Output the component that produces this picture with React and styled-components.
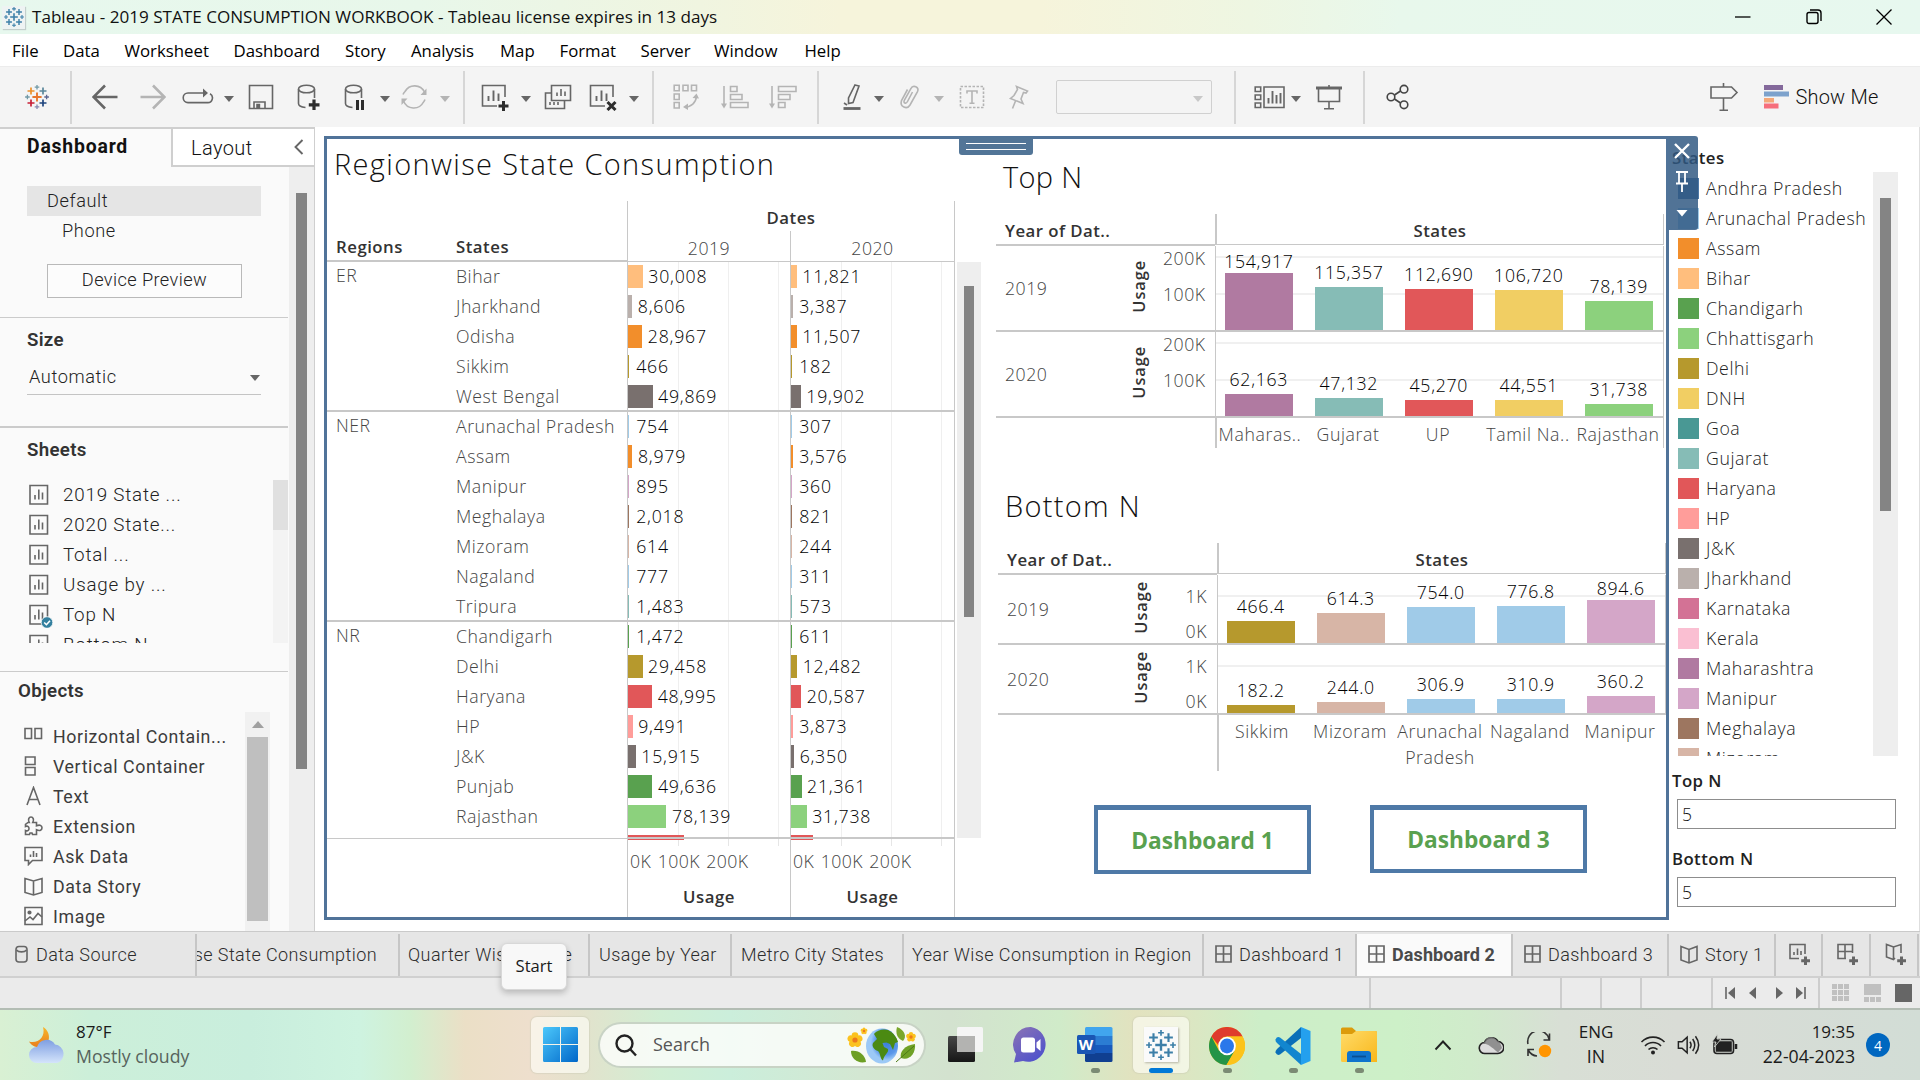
import React from 'react';
import styled, { createGlobalStyle, css } from 'styled-components';

const Global = createGlobalStyle`
  *, *::before, *::after { box-sizing: border-box; }
  body { margin: 0; overflow: hidden; background: #fff; }
`;

const SEGOE = '"Open Sans", "Noto Sans", sans-serif';
const BENTON = 'Roboto, "Liberation Sans", sans-serif';

const Page = styled.div`
  width: 1920px;
  height: 1080px;
  display: flex;
  flex-direction: column;
  overflow: hidden;
  white-space: nowrap;
  position: relative;
  background: #fff;
  font-family: ${SEGOE};
`;

/* ---------- window chrome ---------- */
const TitleBar = styled.header`
  height: 34px;
  flex: none;
  display: flex;
  align-items: center;
  padding-left: 2px;
  color: #111;
  font-size: 17.1px;
  background: linear-gradient(90deg, #e7f8ee 0, #e8f7ea 420px, #f0f5e0 700px, #f6f4db 840px, #f6f4db 1040px, #eef6e2 1250px, #e8f8ec 1400px, #e7f8ef 100%);
  & > span { padding-bottom: 2px; }
`;
const AppBadge = styled.div`
  width: 23px;
  height: 23px;
  margin-right: 7px;
  background: #eef3f3;
  box-shadow: 1px 1px 1px #c3cfcc;
  display: flex;
  align-items: center;
  justify-content: center;
`;
const WindowButtons = styled.div`
  margin-left: auto;
  margin-right: 28px;
  display: flex;
  align-items: center;
  gap: 54.5px;
`;
const MenuBar = styled.nav`
  height: 32px;
  flex: none;
  display: flex;
  align-items: center;
  padding-left: 12px;
  font-size: 16.8px;
  color: #000;
`;
const MenuItem = styled.span`
  width: ${p => p.$w}px;
`;
const ToolBar = styled.div`
  height: 61px;
  flex: none;
  display: flex;
  align-items: center;
  background: #f4f4f4;
  border-top: 1px solid #ececec;
`;
const ToolSlot = styled.div`
  flex: none;
  width: ${p => p.$w}px;
  margin-left: ${p => p.$gap}px;
  display: flex;
  justify-content: center;
  align-items: center;
`;
const ToolDivider = styled.i`
  width: 2px;
  height: 53px;
  background: #d6d6d6;
`;
const Caret = styled.i`
  width: 0;
  height: 0;
  margin-top: 3px;
  border: 5px solid transparent;
  border-top: 6px solid ${p => p.$c || '#666'};
  border-bottom: 0;
`;
const ToolCombo = styled.div`
  width: 156px;
  height: 34px;
  border: 1.5px solid #d0d0d0;
  border-radius: 2px;
  display: flex;
  align-items: center;
  justify-content: flex-end;
  padding-right: 8px;
`;
const ShowMe = styled.span`
  font-family: ${BENTON};
  font-size: 20px;
  font-weight: 300;
  letter-spacing: 0.2px;
  color: #111;
`;

/* ---------- left panel ---------- */
const Main = styled.main`
  height: 804px;
  flex: none;
  display: flex;
`;
const SidePanel = styled.aside`
  width: 315px;
  flex: none;
  display: flex;
  flex-direction: column;
  background: #fafafa;
  border-top: 2px solid #cfcfcf;
  border-right: 1px solid #cfcfcf;
  font-family: ${BENTON};
  font-size: 18.2px;
  font-weight: 300;
  letter-spacing: 0.6px;
  color: #222;
  overflow: hidden;
`;
const PanelTabs = styled.div`
  height: 38px;
  flex: none;
  display: flex;
`;
const PanelTabActive = styled.div`
  width: 171px;
  padding: 6px 0 0 27px;
  line-height: 24px;
  font-weight: 700;
  font-size: 19.4px;
  letter-spacing: 0.8px;
  color: #111;
`;
const PanelTab = styled.div`
  flex: 1;
  background: #fff;
  border-left: 2px solid #cfcfcf;
  border-bottom: 2px solid #cfcfcf;
  display: flex;
  align-items: center;
  justify-content: space-between;
  padding: 2px 10px 0 18px;
  font-size: 20px;
  letter-spacing: 0.4px;
  color: #111;
`;
const PanelBody = styled.div`
  flex: 1;
  min-height: 0;
  display: flex;
`;
const PanelContent = styled.div`
  width: 289px;
  display: flex;
  flex-direction: column;
`;
const Section = styled.section`
  height: ${p => p.$h}px;
  flex: none;
  border-bottom: ${p => p.$line || 1}px solid #cbcbcb;
  margin-right: 1px;
  padding-top: ${p => p.$pt || 0}px;
  padding-left: ${p => p.$pl ?? 27}px;
  overflow: hidden;
`;
const DeviceRow = styled.div`
  width: 234px;
  height: 30px;
  display: flex;
  align-items: center;
  padding: 0 0 2px ${p => p.$indent}px;
  background: ${p => (p.$active ? '#e5e5e5' : 'transparent')};
`;
const PreviewButton = styled.div`
  width: 195px;
  height: 34px;
  margin: 18px 0 0 20px;
  padding-bottom: 3px;
  border: 1px solid #b9b9b9;
  background: #fcfcfc;
  display: flex;
  align-items: center;
  justify-content: center;
  letter-spacing: 0.4px;
`;
const Heading = styled.h3`
  margin: 0;
  height: 30px;
  line-height: 30px;
  font-size: 18.7px;
  font-weight: 600;
  letter-spacing: 0.3px;
  color: #333;
`;
const SizeSelect = styled.div`
  width: 234px;
  height: 36px;
  margin-top: 4px;
  padding: 0 1px 0 2px;
  border-bottom: 1.5px solid #c4c4c4;
  display: flex;
  align-items: center;
  justify-content: space-between;
`;
const SheetBox = styled.div`
  height: 163px;
  display: flex;
  justify-content: space-between;
  margin-top: 15px;
  overflow: hidden;
`;
const SheetRow = styled.div`
  height: 30px;
  display: flex;
  align-items: center;
  padding-left: 2px;
  gap: 10px;
  letter-spacing: 0.8px;
  font-size: 18.8px;
`;
const ObjectBox = styled.div`
  display: flex;
  justify-content: space-between;
  margin: 6px 18px 0 6px;
`;
const ObjectList = styled.div`
  padding-top: 9px;
`;
const ObjectRow = styled.div`
  height: 30px;
  display: flex;
  align-items: center;
  gap: 10px;
  font-size: 17.8px;
  font-weight: 400;
  letter-spacing: 0.6px;
  color: #3c3c3c;
  & svg { flex: none; }
`;
const ScrollTrack = styled.div`
  flex: none;
  width: ${p => p.$w}px;
  height: ${p => (p.$h ? p.$h + 'px' : '100%')};
  padding-top: ${p => p.$pt || 0}px;
  background: ${p => p.$bg || '#eeeeee'};
  display: flex;
  flex-direction: column;
  align-items: center;
`;
const ScrollThumb = styled.div`
  width: ${p => p.$w}px;
  height: ${p => p.$h}px;
  background: ${p => p.$bg || '#848484'};
`;
const UpArrow = styled.i`
  border: 6px solid transparent;
  border-bottom: 7px solid #a0a0a0;
  border-top: 0;
  margin: 9px 0;
`;

/* ---------- dashboard frame ---------- */
const Canvas = styled.div`
  flex: none;
  width: 1354px;
  padding: 9px 0 11px 9px;
`;
const Frame = styled.div`
  position: relative;
  width: 1345px;
  height: 784px;
  border: 3px solid #507399;
  display: flex;
`;
const Handle = styled.div`
  position: absolute;
  left: 632px;
  top: -2px;
  width: 74px;
  height: 18px;
  background: #527597;
  border-radius: 0 0 3px 3px;
  display: flex;
  flex-direction: column;
  gap: 5px;
  padding: 6px 7px;
  & i { height: 1px; background: #fff; }
`;
const SheetTitle = styled.h2`
  margin: 0;
  height: ${p => p.$h}px;
  line-height: ${p => p.$h - 2}px;
  padding-left: 7px;
  font-size: 29px;
  font-weight: 300;
  letter-spacing: ${p => p.$ls ?? 1.35}px;
  color: #111;
`;
const LINE = '#c8c8c8';
const vizText = css`
  font-size: 17.7px;
  font-weight: 300;
  letter-spacing: 0.52px;
`;
const TablePane = styled.section`
  width: 669px;
  flex: none;
`;
const HeadGrid = styled.div`
  height: 61px;
  margin-top: 10px;
  display: flex;
  width: 628px;
`;
const HeadLabel = styled.div`
  width: ${p => p.$w}px;
  display: flex;
  align-items: flex-end;
  padding: 0 0 1px 9px;
  border-bottom: 2px solid ${LINE};
  line-height: 24px;
  font-size: 16.8px;
  font-weight: 600;
  letter-spacing: 0.5px;
  color: #333;
`;
const HeadDates = styled.div`
  width: 328px;
  border: 1px solid ${LINE};
  border-top: 0;
  display: flex;
  flex-direction: column;
`;
const HeadBold = styled.div`
  height: ${p => p.$h || 30}px;
  display: flex;
  align-items: center;
  justify-content: center;
  padding-top: ${p => p.$pt || 0}px;
  font-size: 16.8px;
  font-weight: 600;
  letter-spacing: 0.5px;
  color: #333;
`;
const HeadYears = styled.div`
  flex: 1;
  display: grid;
  grid-template-columns: 162px 164px;
  & span {
    ${vizText}
    color: #444;
    text-align: center;
    line-height: 34px;
    height: 30px;
  }
  & span + span { border-left: 1px solid ${LINE}; }
`;
const TableWrap = styled.div`
  display: flex;
  gap: 2px;
  height: 575px;
`;
const TableBody = styled.div`
  width: 628px;
`;
const Group = styled.div`
  height: ${p => p.$h}px;
  display: flex;
  border-bottom: ${p => (p.$last ? 0 : 2)}px solid ${LINE};
`;
const RegionCell = styled.div`
  ${vizText}
  width: 129px;
  padding: 0 0 0 9px;
  line-height: 27px;
  color: #444;
`;
const StatesCol = styled.div`
  width: 171px;
`;
const StateCell = styled.div`
  ${vizText}
  height: 30px;
  line-height: 29px;
  color: #444;
`;
const PlotCol = styled.div`
  width: ${p => p.$w}px;
  border-left: 1px solid ${LINE};
  border-right: ${p => (p.$end ? 1 : 0)}px solid ${LINE};
  background-image: linear-gradient(#efefef, #efefef), linear-gradient(#efefef, #efefef), linear-gradient(#efefef, #efefef);
  background-repeat: no-repeat;
  background-size: 1px 100%;
  background-position: 50px 0, 100px 0, 150px 0;
`;
const BarRow = styled.div`
  height: ${p => p.$h || 30}px;
  display: flex;
  align-items: flex-start;
  padding-top: 3px;
`;
const HBar = styled.i`
  flex: none;
  height: ${p => p.$h || 23}px;
  background: ${p => p.$c};
  width: ${p => p.$w}px;
  margin-right: ${p => Math.max(5.5, 8.2 - p.$w)}px;
`;
const MarkLabel = styled.span`
  ${vizText}
  line-height: 23px;
  letter-spacing: 0.8px;
  color: #000;
`;
const AxisFooter = styled.div`
  height: 80px;
  width: 628px;
  display: flex;
`;
const AxisBlank = styled.div`
  width: 300px;
  margin-top: 1px;
  border-top: 1px solid ${LINE};
`;
const AxisCol = styled.div`
  width: ${p => p.$w}px;
  border-left: 1px solid ${LINE};
  border-right: ${p => (p.$end ? 1 : 0)}px solid ${LINE};
  border-top: 2px solid ${LINE};
  background-image: linear-gradient(${C => '#e15759'}, #e15759), linear-gradient(#e6e6e6, #e6e6e6), linear-gradient(#e6e6e6, #e6e6e6), linear-gradient(#e6e6e6, #e6e6e6);
  background-repeat: no-repeat;
  background-size: ${p => p.$under}px 1px, 1px 7px, 1px 7px, 1px 7px;
  background-position: 0 0, 50px 0, 100px 0, 150px 0;
`;
const AxisTicks = styled.div`
  ${vizText}
  letter-spacing: 0.4px;
  line-height: 24px;
  padding: 10px 0 0 2px;
  display: flex;
  gap: 6.5px;
  color: #444;
`;

/* ---------- ranked charts ---------- */
const ChartsPane = styled.section`
  flex: 1;
  min-width: 0;
  padding-top: 17px;
`;
const Ranked = styled.div`
  width: ${p => p.$w}px;
  margin-left: ${p => p.$ml}px;
  margin-bottom: 37px;
`;
const RankHead = styled.div`
  height: 32px;
  margin-top: 14px;
  display: flex;
`;
const RankYearHead = styled.div`
  width: 219px;
  padding: 4px 0 0 9px;
  border-bottom: 2px solid ${LINE};
  line-height: 26px;
  font-size: 16.8px;
  font-weight: 600;
  letter-spacing: 0.45px;
  color: #333;
`;
const RankStatesHead = styled.div`
  flex: 1;
  border-left: 2px solid ${LINE};
  border-right: 1px solid ${LINE};
  border-bottom: 1px solid ${LINE};
  margin-bottom: 1px;
`;
const RankRow = styled.div`
  height: ${p => p.$h}px;
  display: flex;
  border-bottom: 2px solid ${LINE};
`;
const YearCell = styled.div`
  ${vizText}
  width: 120px;
  padding: 0 0 1px 9px;
  display: flex;
  align-items: center;
  color: #444;
`;
const AxisName = styled.div`
  width: 47px;
  padding: 0 3px 4px 0;
  display: flex;
  align-items: center;
  justify-content: center;
  & span {
    writing-mode: vertical-rl;
    transform: rotate(180deg);
    font-size: 16.4px;
    font-weight: 600;
    letter-spacing: 0.9px;
    color: #333;
  }
`;
const AxisScale = styled.div`
  ${vizText}
  width: 52px;
  padding: ${p => p.$pt}px 10px 0 0;
  display: flex;
  flex-direction: column;
  gap: ${p => p.$gap}px;
  line-height: 20px;
  text-align: right;
  color: #444;
`;
const Plot = styled.div`
  flex: 1;
  border-left: 1px solid ${LINE};
  border-right: 1px solid ${LINE};
  padding-left: 9px;
  display: flex;
  align-items: flex-end;
  gap: 22.3px;
  background-image: linear-gradient(#f0f0f0, #f0f0f0), linear-gradient(#f0f0f0, #f0f0f0);
  background-repeat: no-repeat;
  background-size: 100% 2px;
  background-position: 0 ${p => p.$grid[0]}px, 0 ${p => p.$grid[1]}px;
`;
const BarCol = styled.div`
  width: 67.7px;
  display: flex;
  flex-direction: column;
  align-items: center;
`;
const BarValue = styled.span`
  ${vizText}
  line-height: 20px;
  margin-bottom: ${p => (p.$tight ? 2 : 5)}px;
  letter-spacing: 0.72px;
  color: #000;
`;
const VBar = styled.i`
  width: 100%;
  height: ${p => p.$h}px;
  background: ${p => p.$c};
`;
const RankFoot = styled.div`
  height: ${p => p.$h}px;
  margin-left: 219px;
  padding: 3px 0 0 0;
  border-left: 2px solid ${LINE};
  border-right: 1px solid ${p => (p.$open ? 'transparent' : LINE)};
  display: grid;
  grid-template-columns: 86px repeat(4, 90px);
  & span {
    ${vizText}
    letter-spacing: 0.6px;
    line-height: 26px;
    display: flex;
    justify-content: center;
    text-align: center;
    color: #444;
    white-space: pre;
  }
`;
const NavButtons = styled.div`
  display: flex;
  gap: 59px;
  padding-left: 98px;
  margin-top: -3px;
`;
const NavButton = styled.div`
  width: 217px;
  height: ${p => p.$h}px;
  border: 4px solid #4e79a7;
  border-top-width: 5px;
  display: flex;
  align-items: center;
  justify-content: center;
  color: #59a14f;
  font-weight: 700;
  font-size: 22.7px;
`;

/* ---------- legend ---------- */
const LegendPane = styled.aside`
  position: relative;
  flex: 1;
  border-right: 1px solid #dedede;
  padding: 18px 0 0 3px;
  display: flex;
  flex-direction: column;
`;
const LegendTitle = styled.div`
  height: 27px;
  line-height: 26px;
  font-size: 16.8px;
  font-weight: 600;
  letter-spacing: 0.4px;
  color: #222;
`;
const LegendBox = styled.div`
  height: 584px;
  display: flex;
  justify-content: space-between;
  overflow: hidden;
  padding: 0 21px 0 6px;
`;
const LegendList = styled.div`
  padding-top: 1px;
`;
const LegendItem = styled.div`
  ${vizText}
  height: 30px;
  display: flex;
  align-items: center;
  gap: 7px;
  color: #222;
  letter-spacing: 0.6px;
  & i { width: 21px; height: 21px; background: ${p => p.$c}; }
`;
const ParamLabel = styled(LegendTitle)`
  margin-top: ${p => p.$mt}px;
`;
const ParamInput = styled.div`
  width: 219px;
  height: 30px;
  margin: 4px 0 0 5px;
  border: 1.5px solid #8d8d8d;
  display: flex;
  align-items: center;
  padding: 0 0 1px 4px;
  font-weight: 300;
  font-size: 17.5px;
  color: #111;
`;
const FloatBar = styled.div`
  position: absolute;
  left: 0;
  top: 9px;
  width: 29px;
  height: 94px;
  border-radius: 0 3px 3px 0;
  background: rgba(48, 88, 130, 0.84);
  display: flex;
  flex-direction: column;
  align-items: center;
  padding: 7px 3px 0 0;
`;

/* ---------- sheet tabs & status ---------- */
const SheetTabs = styled.div`
  height: 47px;
  flex: none;
  display: flex;
  background: #e6e6e6;
  border-top: 1px solid #cacaca;
  border-bottom: 2px solid #d0d0d0;
  font-family: ${BENTON};
  font-size: 18px;
  font-weight: 300;
  letter-spacing: 0.42px;
  color: #2c2c2c;
`;
const SheetTab = styled.div`
  flex: none;
  width: ${p => p.$w}px;
  margin-top: 2px;
  display: flex;
  align-items: center;
  justify-content: ${p => (p.$scrolled ? 'flex-end' : 'flex-start')};
  gap: ${p => p.$gap || 7}px;
  padding-left: ${p => p.$pl ?? 10}px;
  padding-right: ${p => (p.$scrolled ? 21 : 0)}px;
  padding-bottom: 2px;
  border-right: 2px solid #c6c6c6;
  overflow: hidden;
  ${p => p.$active && css`
    background: #fafafa;
    color: #4a4a4a;
    font-weight: 700;
    letter-spacing: 0.1px;
  `}
  & span { flex: none; }
  & svg { flex: none; }
`;
const StatusBar = styled.div`
  height: 30px;
  flex: none;
  display: flex;
  background: #ebebeb;
`;
const StatusCell = styled.div`
  flex: none;
  width: ${p => p.$w}px;
  border-right: 2px solid ${p => (p.$end ? 'transparent' : '#cdcdcd')};
  display: flex;
  align-items: center;
  justify-content: space-between;
  padding: 0 ${p => p.$pr ?? p.$px ?? 0}px 0 ${p => p.$px || 0}px;
`;

/* ---------- taskbar ---------- */
const TaskBar = styled.footer`
  flex: 1;
  display: flex;
  align-items: center;
  border-top: 2px solid #b3bdb4;
  color: #1b1b1b;
  font-size: 17px;
  background: linear-gradient(90deg, #d9f0d3 0, #ccefd9 90px, #c9eedd 250px, #cef3e0 360px, #d2efcf 410px, #ebdfc6 465px, #eedfcd 530px, #e3e2cc 580px, #d1eed4 660px, #cbeedb 730px, #d3e7d2 860px, #d3e2cf 950px, #d0ebc9 1060px, #e2e2bf 1135px, #e0e4c1 1170px, #cdeec8 1260px, #cdf0c8 1400px, #d0ebcb 1470px, #d8dfd5 1560px, #d9dcd6 1680px, #d2ddd6 1920px);
`;
const Weather = styled.div`
  width: 531px;
  padding-left: 28px;
  display: flex;
  align-items: center;
  gap: 10px;
`;
const TwoLine = styled.div`
  display: flex;
  flex-direction: column;
  align-items: ${p => p.$align || 'flex-start'};
  width: ${p => (p.$w ? p.$w + 'px' : 'auto')};
  line-height: 24px;
  padding-bottom: 2px;
  font-size: 17px;
  & small { font-size: 17.7px; color: ${p => p.$sub || '#1b1b1b'}; }
`;
const TaskTile = styled.div`
  flex: none;
  width: ${p => p.$w || 66}px;
  height: 56px;
  display: flex;
  flex-direction: column;
  align-items: center;
  justify-content: space-between;
  padding-top: 10px;
  border-radius: 6px;
  ${p => p.$lit && css`
    background: rgba(255, 255, 248, 0.62);
    box-shadow: 0 0 1px 1px rgba(200, 200, 180, 0.45);
    margin: 0 ${p.$mx || 0}px;
  `}
`;
const RunDot = styled.i`
  width: ${p => (p.$on ? 24 : 9)}px;
  height: 5px;
  border-radius: 3px;
  background: ${p => (p.$on ? '#0078d7' : '#7b8b74')};
`;
const SearchPill = styled.div`
  width: 328px;
  height: 46px;
  margin: 0 14px 0 9px;
  border: 2px solid rgba(175, 190, 172, 0.65);
  border-radius: 23px;
  background: rgba(252, 253, 250, 0.85);
  display: flex;
  align-items: center;
  padding: 0 5px 0 14px;
  font-size: 18px;
  color: #555;
  & span { margin-left: 15px; margin-right: auto; padding-bottom: 2px; }
`;
const Tray = styled.div`
  margin-left: auto;
  padding-right: 30px;
  display: flex;
  align-items: center;
`;
const TrayItem = styled.div`
  display: flex;
  justify-content: center;
  width: ${p => p.$w}px;
`;
const Badge = styled.div`
  width: 24px;
  height: 24px;
  border-radius: 50%;
  margin-left: 11px;
  background: #0067c0;
  color: #fff;
  font-size: 14px;
  display: flex;
  align-items: center;
  justify-content: center;
`;
const StartTip = styled.div`
  position: absolute;
  left: 501px;
  top: 943px;
  width: 66px;
  height: 47px;
  padding-bottom: 2px;
  border-radius: 6px;
  background: #f8f8f8;
  border: 1px solid #d8d8d8;
  box-shadow: 0 3px 6px rgba(0, 0, 0, 0.22);
  display: flex;
  align-items: center;
  justify-content: center;
  font-size: 16.6px;
  color: #1a1a1a;
`;

/* ---------- icons ---------- */
const plus = (x, y, r) => `M${x - r} ${y}H${x + r}M${x} ${y - r}V${y + r}`;
const TableauMark = ({ size = 24, colors }) => {
  const c = colors || ['#e8762d', '#eb912c', '#5b879b', '#c72037', '#1f457e', '#7199a6', '#7199a6', '#5c6692', '#8588b0'];
  return (
    <svg width={size} height={size} viewBox="0 0 24 24" fill="none" strokeWidth="1.7">
      <path d={plus(12, 12, 4.6)} stroke={c[0]} strokeWidth="1.9" />
      <path d={plus(6, 6, 3.5)} stroke={c[1]} />
      <path d={plus(18, 6, 3.5)} stroke={c[2]} />
      <path d={plus(6, 18, 3.5)} stroke={c[3]} />
      <path d={plus(18, 18, 3.5)} stroke={c[4]} />
      <g strokeWidth="1.3">
        <path d={plus(12, 2.2, 2.3)} stroke={c[5]} />
        <path d={plus(2.4, 12, 2.3)} stroke={c[6]} />
        <path d={plus(21.6, 12, 2.3)} stroke={c[7]} />
        <path d={plus(12, 21.8, 2.3)} stroke={c[8]} />
      </g>
    </svg>
  );
};
const BLUES = Array(9).fill('#3c7fa8');
const Ico = ({ w = 26, h = 26, c = '#666', sw = 1.6, children }) => (
  <svg width={w} height={h} viewBox={`0 0 ${w} ${h}`} fill="none" stroke={c} strokeWidth={sw}>{children}</svg>
);
const G = '#b4b4b4';
const Back = () => <Ico sw={2.6}><path d="M1.5 13H25.5M13 1.5L1.5 13L13 24.5" /></Ico>;
const Forward = () => <Ico sw={2.6} c={G}><path d="M.5 13H24.5M13 1.5L24.5 13L13 24.5" /></Ico>;
const Replay = () => <Ico w={32} h={20}><path d="M22 6H6a4.7 4.7 0 0 0 0 9.6H25.5a4.7 4.7 0 0 0 2.5-8.8" /><path d="M21 1.5L26 6L21 10.5Z" fill="#666" stroke="none" /></Ico>;
const Save = () => <Ico><path d="M1.5 1.5H24.5V24.5H1.5Z" /><path d="M6 24V18H17V24" /><path d="M9 20.5h2.4v3H9z" fill="#666" /></Ico>;
const Cylinder = ({ children }) => (
  <Ico w={24} h={26}><ellipse cx="9.5" cy="5" rx="8" ry="3.8" /><path d="M1.5 5V19.5c0 2 3 3.6 7 4M17.5 5V14" />{children}</Ico>
);
const DbAdd = () => <Cylinder><path d="M17 15.5V26M11.8 20.8H22.5" stroke="#2d2d2d" strokeWidth="3.2" /></Cylinder>;
const DbPause = () => <Cylinder><path d="M13.5 16V26M18.5 16V26" stroke="#2d2d2d" strokeWidth="3" /></Cylinder>;
const Refresh = () => <Ico c={G}><path d="M4 7.5A11 11 0 0 1 23.5 8M22.5 18A11 11 0 0 1 2.5 17M2 10.5A11 11 0 0 1 4 7.5M24 15.5A11 11 0 0 1 22.5 18" /><path d="M25.5 4.5V11H19.5ZM.5 21V14.5H6.5Z" fill={G} stroke="none" /></Ico>;
const SheetBase = ({ children }) => (
  <Ico w={28} h={27}><path d="M16 22H1.5V1.5H24V13" /><path d="M7.5 17V12M12.5 17V6.5M17.5 17V9.5" strokeWidth="1.9" />{children}</Ico>
);
const NewSheet = () => <SheetBase><path d="M22.5 17V27M17.5 22H27.5" stroke="#2d2d2d" strokeWidth="3" /></SheetBase>;
const ClearSheet = () => <SheetBase><path d="M18.5 18L26.5 26M26.5 18L18.5 26" stroke="#2d2d2d" strokeWidth="3" /></SheetBase>;
const DupSheet = () => <Ico w={28} h={26}><path d="M7.5 1.5H26.5V16.5H7.5Z" /><path d="M13 12V8.5M17 12V5M21 12V7.5" /><path d="M7 9H1.5V24.5H20.5V17" /><path d="M6 21v-3M10 21v-3M14 21v-3" /></Ico>;
const Swap = () => <Ico c={G}><path d="M1.2 1.2h5v5.5h-5zM10 1.2h5v5.5h-5zM18.5 1.2h5v5.5h-5zM1.2 10h5v5.5h-5zM1.2 18.5h5v5.5h-5z" /><path d="M12 23C18 23 23 19 23.5 12" /><path d="M19.5 14L23.5 9.5L26 14.5ZM15 19.5L10 23L15 26Z" fill={G} stroke="none" /></Ico>;
const SortAsc = () => <Ico w={28} c={G}><path d="M3 2V21" /><path d="M0 19.5H6L3 24.5Z" fill={G} stroke="none" /><path d="M9.5 2.5H16V7.5H9.5ZM9.5 10.5H21V15.5H9.5ZM9.5 18.5H27V23.5H9.5Z" /></Ico>;
const SortDesc = () => <Ico w={28} c={G}><path d="M3 2V21" /><path d="M0 19.5H6L3 24.5Z" fill={G} stroke="none" /><path d="M9.5 2.5H27V7.5H9.5ZM9.5 10.5H21V15.5H9.5ZM9.5 18.5H16V23.5H9.5Z" /></Ico>;
const Pen = () => <Ico w={22} h={28}><path d="M11.5 2.5L15.5 3.5L9.5 20L5 21V15.5Z" transform="translate(1.5 -.5)" /><path d="M2 20L5 22" /><path d="M1.5 25.5H18.5" strokeWidth="2.8" /></Ico>;
const Clip = () => <Ico w={22} h={26} c={G}><path d="M13.5 8L8.5 17.5c-1.6 3-4.5 1.3-3.2-1.2L12 4.5c2.2-4.5 8.5-1.2 6.5 3.2L11 21c-3 5-10.5 2-8.5-4.5L8.5 5.5" /></Ico>;
const TextMark = () => <Ico c={G}><path d="M1.5 2.5H24.5V23.5H1.5Z" strokeDasharray="2.5 1.5" /><path d="M8 9.5V7H18V9.5M13 7V19M10.5 19.2H15.5" /></Ico>;
const PinIcon = () => <Ico w={22} c={G}><path d="M8.5 2.5L19.5 7L18 9L15.5 8.5L13 15L15 19.5L2.5 14.5L6 11.5L9.5 5.5ZM7.5 17L4.5 24.5" /></Ico>;
const Fit = () => <Ico w={31}><path d="M1.2 3h5.5v4.5h-5.5zM1.2 11h5.5v4.5h-5.5zM1.2 19h5.5v4.5h-5.5zM10 3H30V23.5H10Z" /><path d="M14.5 19.5V14M18.5 19.5V7M22.5 19.5V11M26.5 19.5V9" strokeWidth="1.9" /></Ico>;
const Present = () => <Ico w={28}><path d="M1 4H27" strokeWidth="3" /><path d="M3.5 5V17.5H24.5V5M14 17.5V24.5M9 24.7H19M14 1v3" /></Ico>;
const Share = () => <Ico w={24} c="#444"><circle cx="5" cy="13" r="3.8" /><circle cx="18" cy="5.2" r="3.8" /><circle cx="18" cy="20.8" r="3.8" /><path d="M8.5 11L14.5 7M8.5 15L14.5 19" /></Ico>;
const Signpost = () => <Ico w={30} h={30}><path d="M2 5H22.5L28 10.5L22.5 16H2ZM14.5 1V5M14.5 16V28M10.5 28.3H19" /></Ico>;
const ShowMeIcon = () => (
  <svg width="25" height="24"><path d="M0 0h19v5H0z" fill="#84699b" /><path d="M0 6.5h25v5H0z" fill="#7da2cc" /><path d="M0 13h10v4.5H0z" fill="#f5a878" /><path d="M0 18.5h14.5v5H0z" fill="#f66f7c" /></svg>
);
const MiniSheet = ({ check }) => (
  <svg width="24" height="26" viewBox="0 0 24 26" fill="none" stroke="#666" strokeWidth="1.6">
    <path d="M1 3.5H18.5V22H1Z" /><path d="M6 17.5V13M9.8 17.5V7.5M13.5 17.5V10.5" />
    {check && <g><circle cx="18" cy="20.5" r="5.8" fill="#33809f" stroke="#fafafa" strokeWidth=".8" /><path d="M15.2 20.5l2.2 2.2 3.6-4" stroke="#fff" /></g>}
  </svg>
);
const GridIcon = () => <Ico w={17} h={18} sw={1.7}><path d="M1 1H16V17H1ZM8.5 1V17M1 9H16" /></Ico>;
const BookIcon = () => <Ico w={18} h={19}><path d="M1 1.5L9 4.5L17 1.5V15L9 18L1 15ZM9 4.5V18" /></Ico>;
const objIcons = {
  h: <Ico w={19} h={18}><path d="M1 1.5H7.5V11.5H1ZM11 1.5H17.5V11.5H11Z" /></Ico>,
  v: <Ico w={19} h={20}><path d="M1.5 1H11V8.5H1.5ZM1.5 11.5H11V19H1.5Z" /></Ico>,
  t: <Ico w={19} h={20}><path d="M3 19L9.5 1.5L16 19M5.2 13.5H13.8" /></Ico>,
  e: <Ico w={19} h={20}><path d="M4 6.5H5.2C3.6 3.500 5 1 7 1S10.400 3.500 8.800 6.500H12.500V9.800C16 8.300 18 9.600 18 11.800S16 15.300 12.500 13.800V18.500H8.500L8 17H6L5.500 18.500H1.500V14.500C4 15.500 5 14 5 12.500S4 9.500 1.500 10.500V8.500Z" /></Ico>,
  a: <Ico w={19} h={20}><path d="M1 1.5H18V14.5H8.5L4.5 18.5V14.5H1Z" /><path d="M6.5 11V8.5M9.5 11V5M12.5 11V7" /></Ico>,
  d: <Ico w={19} h={19}><path d="M1 1.5L9.500 4L18 1.500V15.500L9.500 18L1 15.500ZM9.500 4V18" /></Ico>,
  i: <Ico w={19} h={20}><path d="M1 1.5H18V18.5H1Z" /><path d="M1 15l5-4 3 2.5 5-6 4 3.5" /><circle cx="5.5" cy="6.5" r="1.3" fill="#666" /></Ico>,
};
const DbSmall = () => <Ico w={13} h={18}><rect x="1" y="1.5" width="11" height="15.5" rx="3" /><path d="M1.5 5c2 2.5 8 2.5 10 0" /></Ico>;
const PlusSmall = <path d="M16.5 13.5V22M12.2 17.8H21" strokeWidth="3" />;
const AddSheet = () => <Ico w={22} h={22}><path d="M10 15.5H1V1.5H16V11" /><path d="M5 12V9M8.5 12V5.5M12 12V8" />{PlusSmall}</Ico>;
const AddDash = () => <Ico w={22} h={22}><path d="M9 15.5H1V1.5H15.5V10M8 1.5V15.5M1 8.5H15.5" />{PlusSmall}</Ico>;
const AddStory = () => <Ico w={22} h={22}><path d="M10 15L8.5 16.5L1.5 14V1.5L8.5 4L16 1.5V10M8.5 4V16" />{PlusSmall}</Ico>;

const MoonCloud = () => (
  <svg width="38" height="38" viewBox="0 0 38 38">
    <defs>
      <linearGradient id="moon" x1="0" y1="0" x2="0" y2="1"><stop offset="0" stopColor="#f6b62c" /><stop offset="1" stopColor="#ea7f1c" /></linearGradient>
      <linearGradient id="cloud" x1="0" y1="0" x2="0" y2="1"><stop offset="0" stopColor="#7f9fe2" /><stop offset="1" stopColor="#d4e4fb" /></linearGradient>
    </defs>
    <path d="M15 1C24 6 23 21 11 21C6 21 3 19 1 15.5C9 18 18 12 15 1Z" fill="url(#moon)" />
    <path d="M9 37a8 8 0 0 1 0-16a10 10 0 0 1 18-2.5A9.500 9.500 0 0 1 29 37Z" fill="url(#cloud)" />
  </svg>
);
const WinLogo = () => (
  <svg width="35" height="35"><defs><linearGradient id="win" x1="0" y1="0" x2="1" y2="1"><stop offset="0" stopColor="#4cc8fb" /><stop offset="1" stopColor="#0067c9" /></linearGradient></defs>
    <path d="M0 1.5Q0 0 1.5 0H17V17H0ZM18 0H33.500Q35 0 35 1.5V17H18ZM0 18H17V35H1.5Q0 35 0 33.5ZM18 18H35V33.5Q35 35 33.5 35H18Z" fill="url(#win)" /></svg>
);
const Magnifier = () => <Ico w={24} h={24} c="#222" sw={2.4}><circle cx="10.5" cy="10.5" r="8" /><path d="M16 16L22 22.5" /></Ico>;
const Flower = ({ x, y, s }) => (
  <g transform={`translate(${x} ${y}) scale(${s})`}>
    {[0, 72, 144, 216, 288].map(a => <circle key={a} cx="0" cy="-4.3" r="3.4" fill="#fbc21f" transform={`rotate(${a})`} />)}
    <circle r="2.6" fill="#ec7a1c" />
  </g>
);
const Globe = () => (
  <svg width="72" height="38" viewBox="0 0 72 38">
    <defs><radialGradient id="sea" cx=".65" cy=".4"><stop offset="0" stopColor="#3a7fd8" /><stop offset=".7" stopColor="#5a97ea" /><stop offset="1" stopColor="#9cc9f6" /></radialGradient></defs>
    <ellipse cx="35" cy="20" rx="16" ry="17.500" fill="url(#sea)" />
    <path d="M27 8C30 4 36 2.500 41 4C47 7 50 12 51 16L48 17L46 24L43 18L39.500 16.500L35.500 17L37 21L41 23C42 27 37 28.500 36 34.500C33 33 33.500 27 31 25C27 24 24.500 20 26 17L30 13Z" fill="#4b8a12" />
    <Flower x={8} y={14} s={1} /><Flower x={17} y={5} s={0.45} /><Flower x={64} y={11} s={0.65} />
    <path d="M4 25C12 24 18 29 19 36C11 38 4 33 4 25Z" fill="#6d9f24" />
    <path d="M50 1C58 4 60 11 56 15C51 13 48 8 50 1Z" fill="#7aa72b" />
    <path d="M68 18C58 19 52 26 54 32C62 35 69 28 68 18Z" fill="#6fa126" /><path d="M67 20L49 36" stroke="#4c7a14" fill="none" />
  </svg>
);
const TaskView = () => (
  <svg width="36" height="35"><defs><linearGradient id="tv" x1="0" y1="0" x2="0" y2="1"><stop offset="0" stopColor="#474747" /><stop offset="1" stopColor="#161616" /></linearGradient></defs>
    <rect x="0" y="9" width="27" height="26" rx="1.5" fill="url(#tv)" /><rect x="9" y="0" width="26" height="25" rx="1.5" fill="#f5f5f5" /><path d="M9 9H27V25H10.5Q9 25 9 23.5Z" fill="#b3b3b1" /></svg>
);
const Chat = () => (
  <svg width="36" height="36" viewBox="0 0 36 36"><defs><linearGradient id="chat" x1="0" y1="0" x2=".7" y2="1"><stop offset="0" stopColor="#8c74b4" /><stop offset="1" stopColor="#4f51cc" /></linearGradient></defs>
    <path d="M18 0A17.5 17.5 0 1 1 10 34L1 35.5L3 27A17.5 17.5 0 0 1 18 0Z" fill="url(#chat)" /><rect x="8" y="10.5" width="14" height="15" rx="2.5" fill="#fff" /><path d="M23.5 15.5L27.5 12V24L23.5 20.5Z" fill="#fff" /></svg>
);
const WordText = styled.text`
  font: 700 15px ${SEGOE};
  fill: #fff;
`;
const Word = () => (
  <svg width="36" height="35" viewBox="0 0 36 35"><path d="M8 1.5Q8 0 9.5 0H34Q35.5 0 35.5 1.5V9H8Z" fill="#41a5ee" /><path d="M8 9H35.5V18H8Z" fill="#2b7cd3" /><path d="M8 18H35.5V26H8Z" fill="#185abd" /><path d="M8 26H35.5V33.5Q35.5 35 34 35H9.5Q8 35 8 33.5Z" fill="#103f91" /><rect y="8" width="18.5" height="19" rx="1.5" fill="#1a56b4" /><WordText x="1.8" y="23">W</WordText></svg>
);
const TableauTile = styled.div`
  width: 34px;
  height: 35px;
  background: #fafafa;
  box-shadow: 1px 1px 2px #b5b5a5;
  display: flex;
  align-items: center;
  justify-content: center;
`;
const Chrome = () => (
  <svg width="36" height="38" viewBox="0 0 36 36" preserveAspectRatio="none"><circle cx="18" cy="18" r="18" fill="#fbc116" /><path d="M2.4 9A18 18 0 0 1 33.6 9H18Q10 9 10 18Z" fill="#df3b2d" /><path d="M2.4 9A18 18 0 0 0 17.5 36L25.5 22.5H10Z" fill="#249447" /><path d="M33.6 9H18V18H26V22.5L17.5 36A18 18 0 0 0 33.6 9Z" fill="#fcc31b" /><circle cx="18" cy="18" r="8.8" fill="#fff" /><circle cx="18" cy="18" r="7" fill="#2b78ea" /></svg>
);
const Code = () => (
  <svg width="36" height="38" viewBox="0 0 36 38"><path d="M26 0L35.5 4V34L26 38Z" fill="#24a0ee" /><path d="M26 0V11L5 27.5Q2 29 .5 25.5Q0 24 2 22Z" fill="#0a6fb8" /><path d="M26 38V27L5 10.5Q2 9 .5 12.5Q0 14 2 16Z" fill="#1286cf" /></svg>
);
const Folder = () => (
  <svg width="36" height="36" viewBox="0 0 36 36"><defs><linearGradient id="fold" x1="0" y1="0" x2="1" y2="1"><stop offset="0" stopColor="#ffdb68" /><stop offset="1" stopColor="#f9b71b" /></linearGradient></defs><path d="M0 2Q0 .5 1.5 .5H11L15 4H34.5Q36 4 36 5.5V12H0Z" fill="#dc9b0b" /><path d="M0 7H11L15 4H34.5Q36 4 36 5.5V35H1.5Q0 35 0 33.5Z" fill="url(#fold)" /><path d="M6 35V27Q6 24 9 24H27Q30 24 30 27V35Z" fill="#0f74cd" /><path d="M11 29.5H25" stroke="#0a4f92" strokeWidth="1.8" /></svg>
);
const ChevronUp = () => <Ico w={18} h={12} c="#222" sw={1.9}><path d="M1.5 10.5L9 2.5L16.5 10.5" /></Ico>;
const OneDrive = () => <Ico w={26} h={20} c="#222"><path d="M7 18.5a5.5 5.5 0 0 1-.5-11A7.5 7.5 0 0 1 20 6.5A6 6 0 0 1 19.5 18.5Z" fill="#dcdcdc" /><path d="M3 9.5C9 8 11 10 20 17.500L24 13C23 9 21 6 19 5.5C15 0 9 1 6.5 7Z" fill="#7d7d7d" stroke="none" opacity=".8" /></Ico>;
const SyncIcon = () => <Ico w={26} h={26} c="#333"><path d="M2 12A10.5 10.5 0 0 1 23 7M23.5 1.5V8H17.5M2 24V17.5H8M2.5 18.5A10.5 10.5 0 0 0 11 24" /><circle cx="19" cy="19" r="6.2" fill="#ff9500" stroke="none" /></Ico>;
const Wifi = () => <Ico w={26} h={22} c="#222"><path d="M1.5 8A16 16 0 0 1 24.5 8M5 12A11 11 0 0 1 21 12M8.5 15.5A6.5 6.5 0 0 1 17.5 15.5" /><circle cx="13" cy="18.5" r="2" fill="#222" stroke="none" /></Ico>;
const Speaker = () => <Ico w={26} h={22} c="#222"><path d="M1.5 7.5H5.5L11 2.5V19.5L5.5 14.5H1.5ZM14 7.5Q16.5 11 14 14.5M17 4.5Q21.5 11 17 17.5M20 1.5Q27 11 20 20.5" /></Ico>;
const Battery = () => <Ico w={26} h={22} c="#222"><rect x="2" y="5.5" width="19.5" height="14" rx="3" /><path d="M4.5 8H19V17H4.5Z" fill="#222" /><path d="M24 10V15" strokeWidth="2.5" /><path d="M5.5 0L0 8H4L2.5 13L9 5H5Z" fill="#222" stroke="#d8dcd6" strokeWidth=".8" /></Ico>;

/* ---------- data ---------- */
const C = {
  andhra: '#4e79a7', arun: '#a0cbe8', assam: '#f28e2b', bihar: '#ffbe7d', chand: '#59a14f', chha: '#8cd17d', delhi: '#b6992d', dnh: '#f1ce63',
  goa: '#499894', guj: '#86bcb6', har: '#e15759', hp: '#ff9d9a', jk: '#79706e', jhar: '#bab0ac', kar: '#d37295', ker: '#fabfd2', mah: '#b07aa1',
  man: '#d4a6c8', meg: '#9d7660', miz: '#d7b5a6',
};
const groups = [
  ['ER', 150, [['Bihar', 30008, 11821, C.bihar], ['Jharkhand', 8606, 3387, C.jhar], ['Odisha', 28967, 11507, C.assam], ['Sikkim', 466, 182, C.delhi], ['West Bengal', 49869, 19902, C.jk]]],
  ['NER', 210, [['Arunachal Pradesh', 754, 307, C.arun], ['Assam', 8979, 3576, C.assam], ['Manipur', 895, 360, C.man], ['Meghalaya', 2018, 821, C.meg], ['Mizoram', 614, 244, C.miz], ['Nagaland', 777, 311, C.arun], ['Tripura', 1483, 573, C.guj]]],
  ['NR', 215, [['Chandigarh', 1472, 611, C.chand], ['Delhi', 29458, 12482, C.delhi], ['Haryana', 48995, 20587, C.har], ['HP', 9491, 3873, C.hp], ['J&K', 15915, 6350, C.jk], ['Punjab', 49636, 21361, C.chand], ['Rajasthan', 78139, 31738, C.chha]]],
];
const barWidth = v => Math.max(0.8, v / 2030);
const fmt = v => v.toLocaleString('en-US');
const legend = [['Andhra Pradesh', C.andhra], ['Arunachal Pradesh', C.arun], ['Assam', C.assam], ['Bihar', C.bihar], ['Chandigarh', C.chand], ['Chhattisgarh', C.chha], ['Delhi', C.delhi], ['DNH', C.dnh], ['Goa', C.goa], ['Gujarat', C.guj], ['Haryana', C.har], ['HP', C.hp], ['J&K', C.jk], ['Jharkhand', C.jhar], ['Karnataka', C.kar], ['Kerala', C.ker], ['Maharashtra', C.mah], ['Manipur', C.man], ['Meghalaya', C.meg], ['Mizoram', C.miz]];
const topColors = [C.mah, C.guj, C.har, C.dnh, C.chha];
const botColors = [C.delhi, C.miz, C.arun, C.arun, C.man];
const topRows = [
  { year: '2019', bars: [['154,917', 57], ['115,357', 43], ['112,690', 41], ['106,720', 40], ['78,139', 29]] },
  { year: '2020', bars: [['62,163', 22], ['47,132', 18], ['45,270', 16], ['44,551', 16], ['31,738', 12]] },
];
const botRows = [
  { year: '2019', bars: [['466.4', 22], ['614.3', 30], ['754.0', 36], ['776.8', 37], ['894.6', 43]] },
  { year: '2020', bars: [['182.2', 8], ['244.0', 11], ['306.9', 14], ['310.9', 14], ['360.2', 17]] },
];

/* ---------- composed parts ---------- */
const tools = [
  [36.5, 26, <TableauMark />], [71, 2, <ToolDivider />], [105, 26, <Back />], [153, 26, <Forward />], [198, 32, <Replay />], [228.5, 10, <Caret />],
  [261, 26, <Save />], [309, 24, <DbAdd />], [356, 24, <DbPause />], [385, 10, <Caret />], [413.5, 26, <Refresh />], [445, 10, <Caret $c={G} />], [464, 2, <ToolDivider />],
  [495, 28, <NewSheet />], [526, 10, <Caret />], [558, 28, <DupSheet />], [603, 28, <ClearSheet />], [634, 10, <Caret />], [653, 2, <ToolDivider />],
  [686, 26, <Swap />], [735, 28, <SortAsc />], [783, 28, <SortDesc />], [818, 2, <ToolDivider />], [853, 22, <Pen />], [879, 10, <Caret />],
  [910, 22, <Clip />], [939, 10, <Caret $c={G} />], [972, 26, <TextMark />], [1019, 22, <PinIcon />], [1134, 156, <ToolCombo><Caret $c="#c8c8c8" /></ToolCombo>],
  [1235, 2, <ToolDivider />], [1269, 31, <Fit />], [1296, 10, <Caret />], [1329, 28, <Present />], [1364, 2, <ToolDivider />], [1398, 24, <Share />],
  [1724, 30, <Signpost />], [1776.5, 25, <ShowMeIcon />], [1837, 82, <ShowMe>Show Me</ShowMe>],
];
let edge = 0;
const toolSlots = tools.map(([center, w, node]) => {
  const left = center - w / 2;
  const gap = left - edge;
  edge = left + w;
  return { gap, w, node };
});

function PlotRows({ rows, index, width, end, partial }) {
  return (
    <PlotCol $w={width} $end={end}>
      {rows.map(r => (
        <BarRow key={r[0]}>
          <HBar $w={barWidth(r[index])} $c={r[3]} />
          <MarkLabel>{fmt(r[index])}</MarkLabel>
        </BarRow>
      ))}
      {partial && <BarRow $h={5}><HBar $w={partial} $h={2} $c={C.har} /></BarRow>}
    </PlotCol>
  );
}
function RegionTable() {
  return (
    <TablePane>
      <SheetTitle $h={52}>Regionwise State Consumption</SheetTitle>
      <HeadGrid>
        <HeadLabel $w={120}>Regions</HeadLabel>
        <HeadLabel $w={180}>States</HeadLabel>
        <HeadDates>
          <HeadBold $pt={2}>Dates</HeadBold>
          <HeadYears><span>2019</span><span>2020</span></HeadYears>
        </HeadDates>
      </HeadGrid>
      <TableWrap>
        <TableBody>
          {groups.map(([region, h, rows], i) => (
            <Group key={region} $h={h} $last={i === 2}>
              <RegionCell>{region}</RegionCell>
              <StatesCol>{rows.map(r => <StateCell key={r[0]}>{r[0]}</StateCell>)}</StatesCol>
              <PlotRows rows={rows} index={1} width={163} partial={i === 2 && 56} />
              <PlotRows rows={rows} index={2} width={165} end partial={i === 2 && 22} />
            </Group>
          ))}
        </TableBody>
        <ScrollTrack $w={24} $h={576} $pt={24}><ScrollThumb $w={10} $h={331} /></ScrollTrack>
      </TableWrap>
      <AxisFooter>
        <AxisBlank />
        {[[163, 56], [165, 22]].map(([w, under], i) => (
          <AxisCol key={w} $w={w} $end={i === 1} $under={under}>
            <AxisTicks><span>0K</span><span>100K</span><span>200K</span></AxisTicks>
            <HeadBold $h={44} $pt={3}>Usage</HeadBold>
          </AxisCol>
        ))}
      </AxisFooter>
    </TablePane>
  );
}
function RankedChart({ title, ls, rows, colors, scale, rowH, pt, gap, grid, names, footH, ml, w, open }) {
  return (
    <Ranked $ml={ml} $w={w}>
      <SheetTitle $h={44} $ls={ls}>{title}</SheetTitle>
      <RankHead>
        <RankYearHead>Year of Dat..</RankYearHead>
        <RankStatesHead><HeadBold $pt={3}>States</HeadBold></RankStatesHead>
      </RankHead>
      {rows.map(row => (
        <RankRow key={row.year} $h={rowH}>
          <YearCell>{row.year}</YearCell>
          <AxisName><span>Usage</span></AxisName>
          <AxisScale $pt={pt} $gap={gap}>{scale.map(s => <span key={s}>{s}</span>)}</AxisScale>
          <Plot $grid={grid}>
            {row.bars.map(([label, h], i) => (
              <BarCol key={label}>
                <BarValue $tight={h > 50 || label === '894.6'}>{label}</BarValue>
                <VBar $h={h} $c={colors[i]} />
              </BarCol>
            ))}
          </Plot>
        </RankRow>
      ))}
      <RankFoot $h={footH} $open={open}>{names.map(n => <span key={n}>{n}</span>)}</RankFoot>
    </Ranked>
  );
}

export default function App() {
  return (
    <Page>
      <Global />
      <TitleBar>
        <AppBadge><TableauMark size={20} colors={BLUES} /></AppBadge>
        <span>Tableau - 2019 STATE CONSUMPTION WORKBOOK - Tableau license expires in 13 days</span>
        <WindowButtons>
          <Ico w={16} h={16} c="#000" sw={1.3}><path d="M0 8H15.5" /></Ico>
          <Ico w={16} h={16} c="#000" sw={1.4}><rect x="1" y="3.5" width="11" height="11" rx="2" /><path d="M4 1H12Q15 1 15 4V12" /></Ico>
          <Ico w={16} h={16} c="#000" sw={1.3}><path d="M.5 .5L15.5 15.5M15.5 .5L.5 15.5" /></Ico>
        </WindowButtons>
      </TitleBar>
      <MenuBar>
        {[['File', 51], ['Data', 61.5], ['Worksheet', 109], ['Dashboard', 111.5], ['Story', 66], ['Analysis', 89], ['Map', 59.5], ['Format', 81], ['Server', 73.5], ['Window', 90.5], ['Help', 50]].map(([t, w]) => <MenuItem key={t} $w={w}>{t}</MenuItem>)}
      </MenuBar>
      <ToolBar>{toolSlots.map((t, i) => <ToolSlot key={i} $gap={t.gap} $w={t.w}>{t.node}</ToolSlot>)}</ToolBar>
      <Main>
        <SidePanel>
          <PanelTabs>
            <PanelTabActive>Dashboard</PanelTabActive>
            <PanelTab>Layout<Ico w={10} h={18} sw={1.9}><path d="M8.5 1L1.5 8L8.5 15" /></Ico></PanelTab>
          </PanelTabs>
          <PanelBody>
            <PanelContent>
              <Section $h={151} $pt={19}>
                <DeviceRow $active $indent={20}>Default</DeviceRow>
                <DeviceRow $indent={35}>Phone</DeviceRow>
                <PreviewButton>Device Preview</PreviewButton>
              </Section>
              <Section $h={110} $line={2} $pt={7}>
                <Heading>Size</Heading>
                <SizeSelect>Automatic<Caret /></SizeSelect>
              </Section>
              <Section $h={244} $pt={7}>
                <Heading>Sheets</Heading>
                <SheetBox>
                  <div>
                    {['2019 State ...', '2020 State...', 'Total ...', 'Usage by ...', 'Top N', 'Bottom N'].map(t => (
                      <SheetRow key={t}><MiniSheet check={t === 'Top N'} />{t}</SheetRow>
                    ))}
                  </div>
                  <ScrollTrack $w={15} $bg="#f3f3f3"><ScrollThumb $w={15} $h={50} $bg="#e0e0e0" /></ScrollTrack>
                </SheetBox>
              </Section>
              <Section $h={261} $pl={18} $pt={4}>
                <Heading>Objects</Heading>
                <ObjectBox>
                  <ObjectList>
                    {[['h', 'Horizontal Contain...'], ['v', 'Vertical Container'], ['t', 'Text'], ['e', 'Extension'], ['a', 'Ask Data'], ['d', 'Data Story'], ['i', 'Image']].map(([k, t]) => (
                      <ObjectRow key={k}>{objIcons[k]}{t}</ObjectRow>
                    ))}
                  </ObjectList>
                  <ScrollTrack $w={25} $h={219} $bg="#f1f1f1"><UpArrow /><ScrollThumb $w={21} $h={184} $bg="#bfbfbf" /></ScrollTrack>
                </ObjectBox>
              </Section>
            </PanelContent>
            <ScrollTrack $w={25} $pt={26}><ScrollThumb $w={11} $h={576} /></ScrollTrack>
          </PanelBody>
        </SidePanel>
        <Canvas>
          <Frame>
            <RegionTable />
            <ChartsPane>
              <RankedChart title="Top N" ls={0.3} ml={0} w={668} rows={topRows} colors={topColors} scale={['200K', '100K']} rowH={86} pt={2} gap={16} grid={[10, 47]} footH={30}
                names={['Maharas..', 'Gujarat', 'UP', 'Tamil Na..', 'Rajasthan']} />
              <RankedChart title="Bottom N" ls={1.3} ml={2} w={668} rows={botRows} colors={botColors} scale={['1K', '0K']} rowH={70} pt={11} gap={15} grid={[20, 20]} footH={56} open
                names={['Sikkim', 'Mizoram', 'Arunachal\nPradesh', 'Nagaland', 'Manipur']} />
              <NavButtons>
                <NavButton $h={69}>Dashboard 1</NavButton>
                <NavButton $h={68}>Dashboard 3</NavButton>
              </NavButtons>
            </ChartsPane>
            <Handle><i /><i /></Handle>
          </Frame>
        </Canvas>
        <LegendPane>
          <LegendTitle>States</LegendTitle>
          <LegendBox>
            <LegendList>
              {legend.map(([t, c]) => <LegendItem key={t} $c={c}><i />{t}</LegendItem>)}
            </LegendList>
            <ScrollTrack $w={25} $h={584} $pt={26}><ScrollThumb $w={11} $h={313} /></ScrollTrack>
          </LegendBox>
          <ParamLabel $mt={12}>Top N</ParamLabel>
          <ParamInput>5</ParamInput>
          <ParamLabel $mt={17}>Bottom N</ParamLabel>
          <ParamInput>5</ParamInput>
          <FloatBar>
            <Ico w={18} h={84} c="#fff" sw={2.4}>
              <path d="M2 1L16 15M16 1L2 15" />
              <path d="M3 29H15M3 40.5H15M6 29V40M12 29V40M9 40V49" strokeWidth="1.8" />
              <path d="M3.5 67H14.5L9 73.5Z" fill="#fff" stroke="none" />
            </Ico>
          </FloatBar>
        </LegendPane>
      </Main>
      <SheetTabs>
        <SheetTab $w={197} $pl={15} $gap={8}><DbSmall /><span>Data Source</span></SheetTab>
        <SheetTab $w={203} $scrolled $pl={0}><span>Regionwise State Consumption</span></SheetTab>
        <SheetTab $w={190} $pl={8}><span>Quarter Wise Usage</span></SheetTab>
        <SheetTab $w={142} $pl={9}><span>Usage by Year</span></SheetTab>
        <SheetTab $w={172} $pl={9}><span>Metro City States</span></SheetTab>
        <SheetTab $w={300} $pl={8}><span>Year Wise Consumption in Region</span></SheetTab>
        <SheetTab $w={153} $pl={11}><GridIcon /><span>Dashboard 1</span></SheetTab>
        <SheetTab $w={156} $pl={11} $active><GridIcon /><span>Dashboard 2</span></SheetTab>
        <SheetTab $w={156} $pl={11}><GridIcon /><span>Dashboard 3</span></SheetTab>
        <SheetTab $w={107} $pl={11}><BookIcon /><span>Story 1</span></SheetTab>
        <SheetTab $w={47} $pl={13}><AddSheet /></SheetTab>
        <SheetTab $w={48} $pl={14}><AddDash /></SheetTab>
        <SheetTab $w={48} $pl={14}><AddStory /></SheetTab>
      </SheetTabs>
      <StatusBar>
        <StatusCell $w={1371} /><StatusCell $w={191} /><StatusCell $w={40} /><StatusCell $w={40} /><StatusCell $w={71} />
        <StatusCell $w={107} $px={12}>
          <Ico w={11} h={14}><path d="M1 1V13" /><path d="M10 1V13L3 7Z" fill="#666" stroke="none" /></Ico>
          <Ico w={11} h={14}><path d="M8 1V13L1 7Z" fill="#666" stroke="none" /></Ico>
          <Ico w={11} h={14}><path d="M4 1V13L11 7Z" fill="#666" stroke="none" /></Ico>
          <Ico w={11} h={14}><path d="M10 1V13" /><path d="M1 1V13L8 7Z" fill="#666" stroke="none" /></Ico>
        </StatusCell>
        <StatusCell $w={100} $px={12} $pr={6} $end>
          <svg width="17" height="18" fill="#c0c0c0">{[0, 6, 12].map(x => [0, 6, 12].map(y => <rect key={x + '-' + y} x={x} y={y} width="5" height="5" />))}</svg>
          <svg width="17" height="18" fill="#c0c0c0"><rect width="17" height="11" />{[0, 6, 12].map(x => <rect key={x} x={x} y="13" width="5" height="5" />)}</svg>
          <svg width="17" height="18" fill="#666"><rect width="17" height="18" /></svg>
        </StatusCell>
      </StatusBar>
      <TaskBar>
        <Weather><MoonCloud /><TwoLine $sub="#56635c">87°F<small>Mostly cloudy</small></TwoLine></Weather>
        <TaskTile $w={58} $lit><WinLogo /></TaskTile>
        <SearchPill><Magnifier /><span>Search</span><Globe /></SearchPill>
        <TaskTile $w={51}><TaskView /></TaskTile>
        <TaskTile $w={79}><Chat /></TaskTile>
        <TaskTile $w={50}><Word /><RunDot /></TaskTile>
        <TaskTile $w={56} $lit $mx={13}><TableauTile><TableauMark size={30} colors={BLUES} /></TableauTile><RunDot $on /></TaskTile>
        <TaskTile $w={50}><Chrome /><RunDot /></TaskTile>
        <TaskTile $w={82}><Code /><RunDot /></TaskTile>
        <TaskTile $w={50}><Folder /><RunDot /></TaskTile>
        <Tray>
          <TrayItem $w={48}><ChevronUp /></TrayItem>
          <TrayItem $w={48}><OneDrive /></TrayItem>
          <TrayItem $w={48}><SyncIcon /></TrayItem>
          <TrayItem $w={66}><TwoLine $align="center">ENG<small>IN</small></TwoLine></TrayItem>
          <TrayItem $w={48}><Wifi /></TrayItem>
          <TrayItem $w={24}><Speaker /></TrayItem>
          <TrayItem $w={48}><Battery /></TrayItem>
          <TwoLine $align="flex-end" $w={106}>19:35<small>22-04-2023</small></TwoLine>
          <Badge>4</Badge>
        </Tray>
      </TaskBar>
      <StartTip>Start</StartTip>
    </Page>
  );
}
